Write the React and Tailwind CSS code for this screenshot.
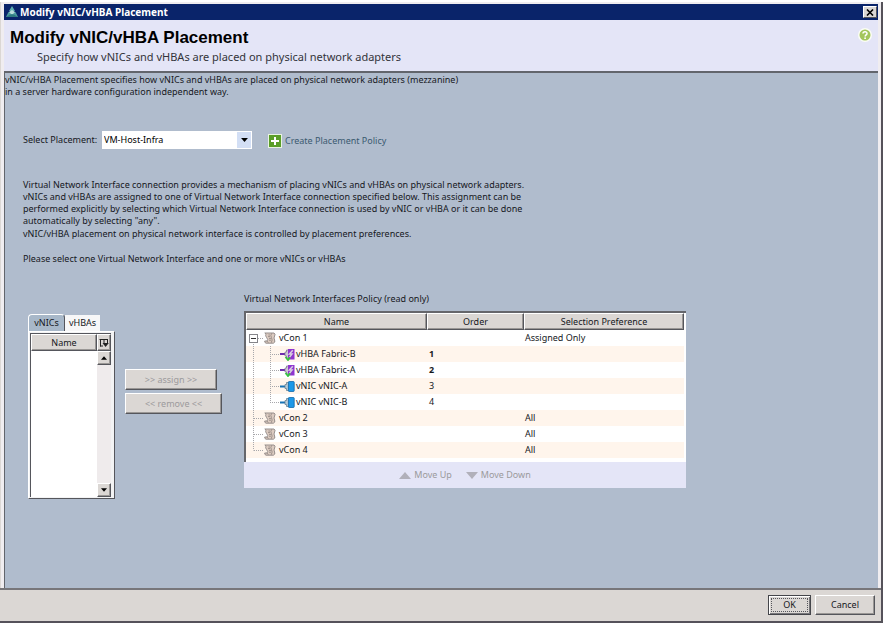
import { useState } from "react";

const raised =
  "border border-t-white border-l-white border-r-[#55565c] border-b-[#55565c] bg-[#dbd7d4] shadow-[inset_-1px_-1px_0_#9a9795]";

const rows = [
  { name: "vCon 1", kind: "vcon", pref: "Assigned Only", branch: "root" },
  { name: "vHBA Fabric-B", kind: "vhba", order: "1", bold: true, branch: "child" },
  { name: "vHBA Fabric-A", kind: "vhba", order: "2", bold: true, branch: "child" },
  { name: "vNIC vNIC-A", kind: "vnic", order: "3", branch: "child" },
  { name: "vNIC vNIC-B", kind: "vnic", order: "4", branch: "lastChild" },
  { name: "vCon 2", kind: "vcon", pref: "All", branch: "node" },
  { name: "vCon 3", kind: "vcon", pref: "All", branch: "node" },
  { name: "vCon 4", kind: "vcon", pref: "All", branch: "lastNode" },
];

function AppIcon() {
  return (
    <svg width="14" height="14" viewBox="0 0 14 14" aria-hidden="true">
      <path d="M7 1 L10 6 H4 Z" fill="#5fb0b0" />
      <path d="M3.5 7 H10.5 L13 12 H1 Z" fill="#4d9a9e" />
      <path d="M4 7 L7 5 L10 7 L8 9 H6 Z" fill="#b9dcda" />
      <path d="M1 12 L5 9.5 H9 L13 12 Z" fill="#2f7a80" />
    </svg>
  );
}

function HelpIcon() {
  return (
    <svg width="14" height="14" viewBox="0 0 14 14" aria-hidden="true">
      <circle cx="7" cy="7" r="7" fill="#fbfdf5" />
      <circle cx="7" cy="7" r="5.5" fill="#a3c65c" />
      <path d="M5 5.6 C5 3.2 9.2 3.2 9 5.6 C8.9 6.9 7.2 6.9 7.2 8.4" fill="none" stroke="#fff" strokeWidth="1.5" />
      <circle cx="7.1" cy="10.2" r="0.9" fill="#fff" />
    </svg>
  );
}

function PlusIcon() {
  return (
    <svg width="14" height="14" viewBox="0 0 14 14" aria-hidden="true">
      <rect width="14" height="14" fill="#e9f3e2" />
      <rect x="1" y="1" width="12" height="12" fill="#5a9e28" />
      <path d="M7 3 V11 M3 7 H11" stroke="#fff" strokeWidth="2" />
    </svg>
  );
}

function ColumnsIcon() {
  return (
    <svg width="10" height="10" viewBox="0 0 10 10" className="shrink-0" aria-hidden="true">
      <path d="M0.5 1.5 H9 M1.5 1 V8.5 M5 1 V5 M8.5 1 V5 M1 8 H4" stroke="#222" strokeWidth="1" fill="none" />
      <path d="M3.5 5 H9.8 L6.6 9 Z" fill="#222" />
    </svg>
  );
}

function Triangle({ up, className }) {
  return (
    <svg width="12" height="7" viewBox="0 0 12 7" className={className} aria-hidden="true">
      <path d={up ? "M6 0 L12 7 H0 Z" : "M0 0 H12 L6 7 Z"} fill="currentColor" />
    </svg>
  );
}

function TreeLines({ branch }) {
  const child = branch === "child" || branch === "lastChild";
  const outer = { root: "M7.5 12 V16", lastNode: "M7.5 0 V8.5" }[branch] || "M7.5 0 V16";
  return (
    <svg width={child ? 34 : 18} height="16" fill="none" stroke="#a7a7ab" strokeDasharray="1 1" className="shrink-0" aria-hidden="true">
      <path d={outer} />
      {child && <path d={branch === "child" ? "M24.5 0 V16" : "M24.5 0 V8.5"} />}
      {child && <path d="M24 8.5 H34" />}
      {!child && <path d={branch === "root" ? "M12 8.5 H18" : "M8 8.5 H18"} />}
      {branch === "root" && (
        <g stroke="#85858a" strokeDasharray="none">
          <rect x="3.5" y="4.5" width="8" height="8" fill="#fff" />
          <path d="M5 8.5 H10" stroke="#333" />
        </g>
      )}
    </svg>
  );
}

function NodeIcon({ kind }) {
  if (kind === "vcon") {
    return (
      <svg width="12" height="12" viewBox="0 0 12 12" className="shrink-0" aria-hidden="true">
        <path
          d="M0.8 1 H10 Q11.8 2 10.6 4 Q9.4 6 10.6 8 Q11.6 10.4 9.4 11.2 H2 Q0.4 10.6 0.7 9 H3 Q4.6 7.6 2.6 5.6 Q1 3.6 2 2.2 Z"
          fill="#dccbc1"
          stroke="#8c8683"
          strokeWidth="0.9"
        />
        <path
          d="M7.8 1.2 Q6 3.4 7.4 5.4 Q9 8 7.2 10.8 M4.4 3 H6 M4 4.6 H6 M5 6.4 H7 M5 8.2 H7 M3 9 L4.4 10.8"
          fill="none"
          stroke="#968b86"
          strokeWidth="0.9"
        />
      </svg>
    );
  }
  if (kind === "vhba") {
    return (
      <svg width="15" height="13" viewBox="0 0 15 13" className="shrink-0" aria-hidden="true">
        <path d="M0 6 H6" stroke="#6f2cae" strokeWidth="2" />
        <path d="M5 4 H6.5 V2 H9 V10 H6.5 V8 H5 Z" fill="#cfc8d6" stroke="#77708a" strokeWidth="0.7" />
        <rect x="8" y="1" width="6.5" height="10.5" fill="#8e35cf" />
        <path d="M12.8 2.2 L9.4 6 H12 L9.2 9.6" fill="none" stroke="#d9d0e0" strokeWidth="1.5" />
        <path d="M5.5 9 L8 12 L10 9.2" fill="none" stroke="#35c23f" strokeWidth="1.8" />
      </svg>
    );
  }
  return (
    <svg width="15" height="13" viewBox="0 0 15 13" className="shrink-0" aria-hidden="true">
      <path d="M0 6.5 H6" stroke="#1873b5" strokeWidth="2" />
      <path d="M5 4.5 H6.5 V2.5 H9 V10.5 H6.5 V8.5 H5 Z" fill="#b8cbd8" stroke="#5b7688" strokeWidth="0.7" />
      <rect x="8.4" y="1.5" width="5.8" height="10" rx="0.8" fill="#1c98e8" stroke="#1368a8" strokeWidth="0.8" />
    </svg>
  );
}

function ScrollButton({ up }) {
  return (
    <button type="button" aria-label={up ? "Scroll up" : "Scroll down"} className={`flex h-[14px] w-full items-center justify-center ${raised}`}>
      <Triangle up={up} className="h-1 w-[6px] text-black" />
    </button>
  );
}

function AdapterPanel() {
  const [tab, setTab] = useState("vNICs");
  return (
    <div className="w-[87px]">
      <div role="tablist" className="flex items-end">
        <button
          type="button"
          role="tab"
          aria-selected={tab === "vNICs"}
          onClick={() => setTab("vNICs")}
          className="h-[17px] w-[37px] rounded-t-sm border-t border-r border-l border-t-white border-r-[#55565c] border-l-white bg-[#a8b8c9] leading-[14px]"
        >
          vNICs
        </button>
        <button
          type="button"
          role="tab"
          aria-selected={tab === "vHBAs"}
          onClick={() => setTab("vHBAs")}
          className="h-4 w-[35px] bg-[#f7f7f8] leading-4"
        >
          vHBAs
        </button>
      </div>
      <div className="border border-t-white border-r-[#55565c] border-b-[#55565c] border-l-white bg-[#f3f3f4] p-px pr-[3px]">
        <div className="flex h-[164px] border-t border-l border-[#55565c] bg-white">
          <div className="flex-1">
            <div className={`flex h-[17px] items-center justify-center ${raised}`}>Name</div>
          </div>
          <div className="flex w-[14px] flex-col bg-[#efebec]">
            <button type="button" aria-label="Columns" className={`flex h-[17px] items-center justify-center ${raised}`}>
              <ColumnsIcon />
            </button>
            <ScrollButton up />
            <div className="flex-1" />
            <ScrollButton />
          </div>
        </div>
      </div>
    </div>
  );
}

function PolicyTable() {
  return (
    <div className="w-[442px]">
      <p className="mb-[6px]">Virtual Network Interfaces Policy (read only)</p>
      <div className="border-t-2 border-l-2 border-[#65666b] bg-white pr-[2px] pb-1">
        <table className="w-full table-fixed border-collapse">
          <colgroup>
            <col className="w-[181px]" />
            <col className="w-[97px]" />
            <col />
          </colgroup>
          <thead>
            <tr>
              {["Name", "Order", "Selection Preference"].map((h) => (
                <th key={h} className="h-[17px] p-0 font-normal">
                  <div className={`h-[17px] leading-[15px] ${raised}`}>{h}</div>
                </th>
              ))}
            </tr>
          </thead>
          <tbody>
            {rows.map((row) => (
              <tr key={row.name} className="even:bg-[#fff5ec]">
                <td className="p-0">
                  <div className="flex h-4 items-center">
                    <TreeLines branch={row.branch} />
                    <NodeIcon kind={row.kind} />
                    <span className={row.kind === "vcon" ? "pl-[3px]" : "pl-px"}>{row.name}</span>
                  </div>
                </td>
                <td className={`py-0 pr-0 pl-[2px] ${row.bold ? "font-bold" : ""}`}>{row.order}</td>
                <td className="py-0 pr-0 pl-px">{row.pref}</td>
              </tr>
            ))}
          </tbody>
        </table>
      </div>
      <div className="flex h-[26px] items-center justify-center gap-[14px] bg-[#e4e5f7] text-[#9b9a9c] [text-shadow:1px_1px_0_white]">
        <button type="button" disabled className="flex items-center gap-[3px]">
          <Triangle up className="text-[#b1b0ba]" />
          Move Up
        </button>
        <button type="button" disabled className="flex items-center gap-[3px]">
          <Triangle className="text-[#b1b0ba]" />
          Move Down
        </button>
      </div>
    </div>
  );
}

export default function App() {
  return (
    <div className="h-screen bg-white pt-[2px] pr-2 pb-[18px] font-['Noto_Sans','Liberation_Sans',sans-serif] text-[9px] leading-3 text-[#16181d]">
      <div className="flex h-full flex-col border-r-2 border-b-2 border-[#55525a] bg-[#dbd7d4]">
        <div className="flex flex-1 flex-col border-l border-[#dbd7d4] bg-[#f0edf0] pt-[2px] pr-[3px] pl-[3px]">
          <header className="flex h-4 items-center bg-[#0a246a] pr-px pl-px text-white">
            <AppIcon />
            <span className="flex-1 pl-px text-[10px] font-bold">Modify vNIC/vHBA Placement</span>
            <button
              type="button"
              aria-label="Close"
              className="flex h-3 w-[14px] items-center justify-center border border-t-white border-r-[#55565c] border-b-[#55565c] border-l-white bg-[#dbd7d4]"
            >
              <svg width="8" height="7" viewBox="0 0 8 7" aria-hidden="true">
                <path d="M1 0.5 L7 6.5 M7 0.5 L1 6.5" stroke="#000" strokeWidth="1.6" />
              </svg>
            </button>
          </header>

          <div className="flex h-[51px] justify-between bg-[#e4e5f7] pt-2 pr-[6px] pl-[6px]">
            <div>
              <h1 className="font-['Liberation_Sans',sans-serif] text-[17px] leading-5 font-bold text-black">
                Modify vNIC/vHBA Placement
              </h1>
              <p className="pt-px pl-[27px] text-[11px] leading-4 text-[#33343a]">
                Specify how vNICs and vHBAs are placed on physical network adapters
              </p>
            </div>
            <button type="button" aria-label="Help" className="h-[14px]">
              <HelpIcon />
            </button>
          </div>

          <main className="flex-1 border-t-2 border-l border-[#62656c] bg-[#b0bccd] pt-px">
            <p>
              vNIC/vHBA Placement specifies how vNICs and vHBAs are placed on physical network adapters (mezzanine)
              <br />
              in a server hardware configuration independent way.
            </p>

            <div className="flex items-center pt-[33px] pl-[18px]">
              <label htmlFor="placement" className="w-[79px]">
                Select Placement:
              </label>
              <div className="relative">
                <select id="placement" className="block h-[18px] w-[150px] appearance-none bg-white pl-[2px] text-black">
                  <option>VM-Host-Infra</option>
                </select>
                <span className="pointer-events-none absolute top-px right-px flex h-4 w-[14px] items-center justify-center bg-[#d3dff5]">
                  <Triangle className="h-1 w-[7px] text-black" />
                </span>
              </div>
              <a href="#create" className="flex items-center gap-[3px] pt-[2px] pl-4 text-[#3b5a70]">
                <PlusIcon />
                Create Placement Policy
              </a>
            </div>

            <div className="pt-[30px] pl-[18px]">
              <p>
                Virtual Network Interface connection provides a mechanism of placing vNICs and vHBAs on physical network adapters.
                <br />
                vNICs and vHBAs are assigned to one of Virtual Network Interface connection specified below. This assignment can be
                <br />
                performed explicitly by selecting which Virtual Network Interface connection is used by vNIC or vHBA or it can be done
                <br />
                automatically by selecting "any".
              </p>
              <p className="pt-px">vNIC/vHBA placement on physical network interface is controlled by placement preferences.</p>
              <p className="pt-[13px]">Please select one Virtual Network Interface and one or more vNICs or vHBAs</p>
            </div>

            <div className="flex items-start pt-7 pl-[23px]">
              <div className="pt-[21px]">
                <AdapterPanel />
              </div>
              <div className="flex flex-col items-start gap-[3px] pt-[76px] pr-[22px] pl-[10px] text-[#9b9a9c] [text-shadow:1px_1px_0_white]">
                <button type="button" disabled className={`h-[21px] w-[92px] ${raised}`}>
                  &gt;&gt; assign &gt;&gt;
                </button>
                <button type="button" disabled className={`h-[21px] w-[97px] ${raised}`}>
                  &lt;&lt; remove &lt;&lt;
                </button>
              </div>
              <PolicyTable />
            </div>
          </main>
        </div>

        <footer className="flex h-[33px] items-center justify-end gap-1 border-t-2 border-[#77767a] pr-[6px] pb-[2px]">
          <button type="button" className="h-5 w-[43px] border border-[#44454a] bg-[#dbd7d4] p-[2px] shadow-[inset_1px_1px_0_white,inset_-1px_-1px_0_#77767a]">
            <span className="flex h-full items-center justify-center border border-dotted border-[#55565c]">OK</span>
          </button>
          <button type="button" className={`h-5 w-[60px] ${raised}`}>
            Cancel
          </button>
        </footer>
      </div>
    </div>
  );
}
